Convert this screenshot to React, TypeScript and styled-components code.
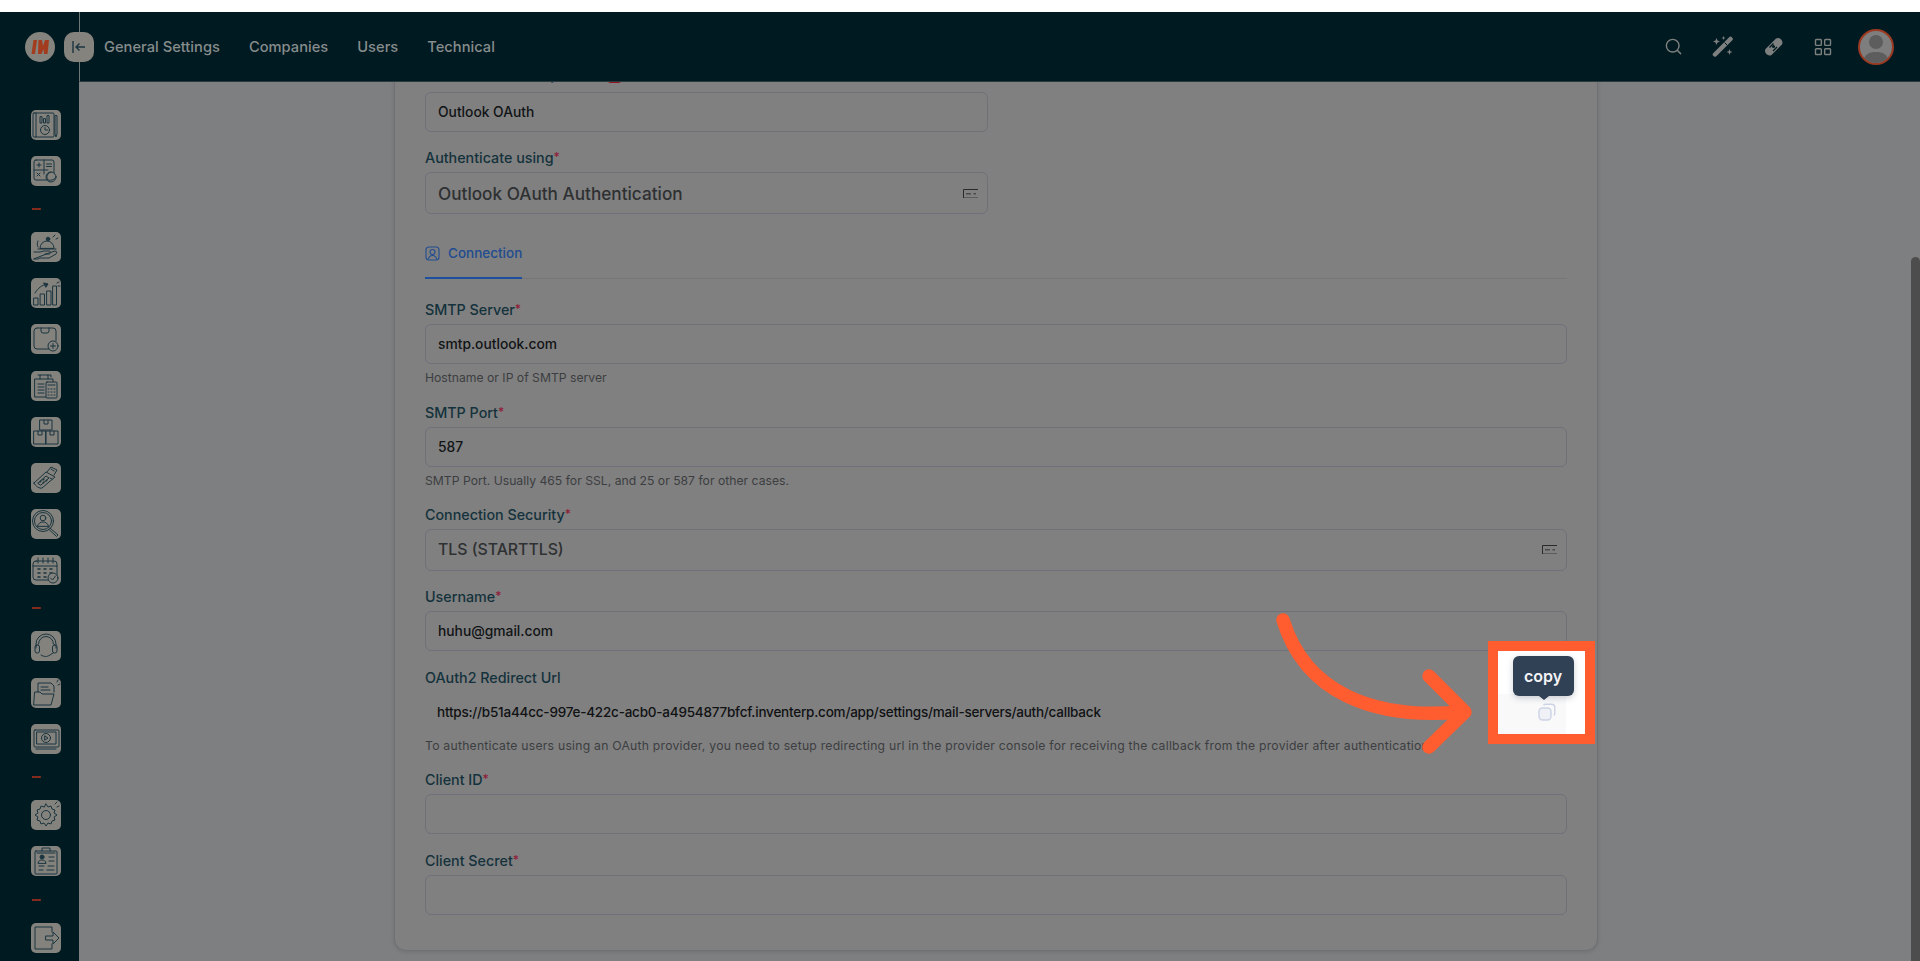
import React from 'react'
import styled, { createGlobalStyle } from 'styled-components'
import { Search, LayoutGrid } from 'lucide-react'

const GlobalStyle = createGlobalStyle`
    html, body {
        margin: 0;
        height: 961px;
        overflow: hidden;
        background: #ffffff;
        font-family: 'Inter', 'Liberation Sans', sans-serif;
    }
`

const Page = styled.div`
    position: relative;
    width: 1920px;
    height: 961px;
    padding-top: 12px;
    box-sizing: border-box;
    overflow: hidden;
    display: flex;
`

const Sidebar = styled.aside`
    width: 79px;
    flex: none;
    background: #001a21;
    padding: 20px 0 0 31px;
    box-sizing: border-box;
    display: flex;
    flex-direction: column;
    gap: 16.05px;
`

const Logo = styled.div`
    width: 30px;
    height: 30px;
    margin: 0 0 31.5px -6px;
    border-radius: 50%;
    background: #85837d;
    display: flex;
    align-items: center;
    justify-content: center;
`

const Tile = styled.div`
    width: 30px;
    height: 30px;
    flex: none;
    border-radius: 5px;
    background: #83827c;
    svg {
        display: block;
    }
`

const Separator = styled.div`
    width: 9px;
    height: 14.7px;
    flex: none;
    margin-left: 1px;
    display: flex;
    align-items: center;
    &::before {
        content: '';
        width: 9px;
        height: 2px;
        background: repeating-linear-gradient(90deg, #8c2b1c 0 2.4px, #6d2a1e 2.4px 3px);
    }
`

const Main = styled.div`
    flex: 1;
    min-width: 0;
    display: flex;
    flex-direction: column;
`

const TopBar = styled.header`
    position: relative;
    height: 70px;
    flex: none;
    box-sizing: border-box;
    background: #001a21;
    border-left: 1px solid #6f7678;
    border-bottom: 1px solid #2b3a3e;
    padding: 0 26px 0 24px;
    display: flex;
    align-items: center;
    z-index: 2;
`

const CollapseButton = styled.button`
    position: absolute;
    left: -16px;
    top: 20px;
    width: 30px;
    height: 30px;
    padding: 0;
    border: 0;
    border-radius: 10px;
    background: #85837d;
    display: flex;
    align-items: center;
    justify-content: center;
`

const Nav = styled.nav`
    display: flex;
    gap: 29px;
`

const NavItem = styled.a`
    font-size: 14.7px;
    font-weight: 500;
    line-height: 20px;
    color: #878c8c;
`

const TopActions = styled.div`
    margin-left: auto;
    display: flex;
    align-items: center;
    color: #7d807e;
`

const ActionSlot = styled.span`
    width: 50px;
    display: flex;
    justify-content: center;
`

const Avatar = styled.div`
    width: 36px;
    height: 36px;
    margin-left: 10px;
    box-sizing: border-box;
    border: 2px solid #9a3a22;
    border-radius: 50%;
    background: #7e7e7e;
    overflow: hidden;
`

const Content = styled.main`
    position: relative;
    flex: 1;
    min-height: 0;
    overflow: hidden;
    background: #7e7f81;
    padding: 0 7px 10px 0;
    display: flex;
    justify-content: center;
    align-items: flex-end;
`

const ScrollThumb = styled.div`
    position: absolute;
    right: 0;
    top: 175px;
    bottom: 0;
    width: 9px;
    border-radius: 5px 5px 0 0;
    background: #4d4d4d;
`

const Card = styled.section`
    width: 1204px;
    flex: none;
    box-sizing: border-box;
    padding: 0 30px 35px;
    background: #808080;
    border: 1px solid #6f7076;
    border-radius: 12px;
    box-shadow: 0 1px 4px rgba(0, 0, 0, 0.12);
    display: flex;
    flex-direction: column;
    gap: 16.6px;
`

const Field = styled.div<{ $half?: boolean; $labelGap?: number }>`
    display: flex;
    flex-direction: column;
    gap: ${(p) => p.$labelGap ?? 4}px;
    width: ${(p) => (p.$half ? '563px' : '100%')};
`

const Label = styled.label`
    font-size: 14.3px;
    font-weight: 500;
    line-height: 20px;
    height: 20px;
    color: #14323c;
`

const Req = styled.span`
    color: #8f1d3a;
    font-size: 12px;
    line-height: 1;
    vertical-align: 2px;
`

const Flag = styled.span`
    display: inline-block;
    width: 15px;
    height: 12px;
    margin-left: 22px;
    border-radius: 4px;
    background: #8f1420;
    vertical-align: -3px;
`

const Input = styled.div`
    height: 40px;
    box-sizing: border-box;
    padding: 0 12px;
    border: 1.5px solid #6f707a;
    border-radius: 6px;
    display: flex;
    align-items: center;
    font-size: 13.8px;
    font-weight: 500;
    color: #111416;
`

const SelectBox = styled(Input)<{ $size: number }>`
    height: 41.5px;
    padding-right: 9px;
    justify-content: space-between;
    font-size: ${(p) => p.$size}px;
    color: #2e3032;
`

const ReadOnlyValue = styled.div`
    height: 40px;
    padding: 0 12px;
    display: flex;
    align-items: center;
    font-size: 13.5px;
    font-weight: 500;
    letter-spacing: -0.22px;
    color: #101214;
    white-space: nowrap;
`

const Hint = styled.p`
    margin: 2px 0 0;
    font-size: 12.2px;
    line-height: 16px;
    color: #3c3e41;
    white-space: nowrap;
`

const LongHint = styled(Hint)`
    letter-spacing: 0.24px;
`

const Tabs = styled.div`
    height: 46px;
    margin: 3px 0 4px;
    box-sizing: border-box;
    border-bottom: 1px solid #767778;
    display: flex;
`

const Tab = styled.div`
    height: 46px;
    box-sizing: border-box;
    padding-bottom: 4px;
    border-bottom: 2.5px solid #1c4f9e;
    display: flex;
    align-items: center;
    gap: 8px;
    font-size: 13.5px;
    font-weight: 500;
    color: #214c90;
`

const Spotlight = styled.div`
    position: absolute;
    left: 1488px;
    top: 641px;
    width: 107px;
    height: 103px;
    box-sizing: border-box;
    border: 10px solid #ff5c2f;
    background: linear-gradient(90deg, #f9f9fa 0 68px, #ffffff 68px);
    z-index: 5;
    display: flex;
    flex-direction: column;
    align-items: center;
    &::before {
        content: '';
        position: absolute;
        inset: 0 0 40px 0;
        background: #ffffff;
    }
`

const Tooltip = styled.div`
    position: relative;
    width: 61px;
    height: 40px;
    margin: 5px 0 0 3px;
    border-radius: 6px;
    background: #304156;
    box-shadow: 0 2px 6px rgba(48, 65, 86, 0.25);
    display: flex;
    align-items: center;
    justify-content: center;
    font-size: 16px;
    font-weight: 600;
    color: #f2f3f5;
    &::after {
        content: '';
        position: absolute;
        left: 26px;
        bottom: -4px;
        border-left: 5px solid transparent;
        border-right: 5px solid transparent;
        border-top: 4px solid #304156;
    }
`

const CopyIcon = styled.svg`
    position: relative;
    margin: 7px 0 0 10px;
`

const Annotation = styled.svg`
    position: absolute;
    left: 1270px;
    top: 605px;
    z-index: 4;
`

const ink = {
    fill: 'none',
    stroke: '#1b3540',
    strokeWidth: 1,
    strokeLinecap: 'round',
    strokeLinejoin: 'round',
} as const

const sidebarIcons: React.ReactNode[] = [
    <>
        <rect x="2" y="3" width="21" height="24" rx="1" />
        <path d="M5 3v24M26 6v18l-1 3-1-3V6z" />
        <path d="M9 7v6h2V7zM12.5 9v4h2V9zM16 6v7h2V6z" />
        <circle cx="14" cy="20" r="4.5" />
        <path d="M14 17.5V20h2.5" />
    </>,
    <>
        <rect x="3" y="4" width="20" height="20" rx="2" />
        <path d="M13 4v14M3 14h14M6 9h4M8 7v4M15.5 8h5M15.5 10.5h5M6 17l3 3M9 17l-3 3" />
        <circle cx="20" cy="21" r="5" fill="#83827c" />
        <path d="M20 16a5 5 0 0 0-3 8c4 1 7-1 8-3" />
    </>,
    <>
        <circle cx="17" cy="7" r="1.8" fill="#1b3540" />
        <path d="M9 16a7 7 0 0 1 14 0zM7 17h18M7 9c-1 2-1 4 0 6M22 5l2-2M25 7l2-1" />
        <path d="M3 20h6l4-1h5c2 0 2 3 0 3h-4M18 21l6-2c2 0 2 2 1 3l-7 4H9l-2 1H3z" />
    </>,
    <>
        <rect x="3" y="20" width="4" height="7" />
        <rect x="9.5" y="16" width="4" height="11" />
        <rect x="16" y="13" width="4" height="14" />
        <rect x="22" y="8" width="3.5" height="19" />
        <path d="M4 15c3-5 7-8 12-9" />
        <path d="M13 5l4 1-2 3z" fill="#1b3540" />
        <path d="M26 5l2-1M27 8h2" />
    </>,
    <>
        <path d="M6 4h16a3 3 0 0 1 3 3v10M18 25H6a3 3 0 0 1-3-3V7a3 3 0 0 1 3-3" />
        <path d="M10 4v3a2 2 0 0 0 2 2h4a2 2 0 0 0 2-2V4" />
        <circle cx="22" cy="22" r="5" />
        <path d="M22 19.5v5M19.5 22h5" />
    </>,
    <>
        <path d="M4 8h18v18H4zM9 8V4h8v4M7 4h2M17 4h3v2" />
        <path d="M7 13h6M7 16h6M7 19h6M7 22h6" />
        <rect x="15" y="11" width="11" height="16" rx="1" fill="#83827c" />
        <path d="M17 14h7M17 18h1M20 18h1M23 18h1M17 21h1M20 21h1M23 21h1M17 24h1M20 24h1M23 24h1" />
    </>,
    <>
        <path d="M9 3h12v10H9zM13 3v4h4V3" />
        <path d="M3 14h12v13H3zM7 14v4h4v-4" />
        <path d="M15 14h12v13H15zM19 14v4h4v-4" />
    </>,
    <>
        <path d="M3 20L15 9l9 5-13 11c-2 1-7-2-8-5z" />
        <path d="M7 20l8-7 3 2-8 7zM19 15l2 1" />
        <path d="M9 19l1-1M12 17l1-1M12 20l1-1M15 18l1-1" strokeWidth="1.3" />
        <path d="M16 9l4-5 6 3-3 5M20 6l3 2" />
    </>,
    <>
        <circle cx="12" cy="12" r="10.5" />
        <circle cx="12" cy="12" r="8.5" />
        <circle cx="12" cy="9" r="2.8" />
        <path d="M6.5 17c1-3 3-4 5.5-4s4.500 1 5.500 4zM19 19l8 7-1.500 1.500-7.500-7" />
    </>,
    <>
        <rect x="2" y="6" width="24" height="19" rx="3" />
        <path d="M2 11h24M7 3v5M12 3v5M17 3v5M22 3v5" />
        <path d="M7 14h2M13 14h2M19 14h2M7 18h2M13 18h2M19 18h2M7 22h2M13 22h2" strokeWidth="1.6" />
        <circle cx="22" cy="23" r="5" fill="#83827c" />
        <path d="M19.500 23l2 2 3-4" />
    </>,
    <>
        <path d="M5 17v-4a10 10 0 0 1 20 0v4M7.500 13a7.500 7.500 0 0 1 15 0" />
        <rect x="4" y="14" width="4.500" height="8" rx="2" />
        <rect x="21.500" y="14" width="4.500" height="8" rx="2" />
        <path d="M10 24c3 2 6 2 9 0l3-2" />
    </>,
    <>
        <path d="M7 14V5h13l3 3v6" />
        <path d="M10 9h7M10 12h9" />
        <path d="M4 14h5l2 2h12l-3 11H3z" />
        <path d="M26 4l1-2M27 7l2-1" />
    </>,
    <>
        <rect x="3" y="6" width="25" height="17" rx="1" />
        <rect x="6" y="8" width="19" height="12" />
        <circle cx="15" cy="14" r="4.500" />
        <path d="M14 12l3 2-3 2zM5 25h20" />
    </>,
    <>
        <path d="M15 4l2 3 3-1 1 3 3 1-1 3 3 2-3 2 1 3-3 1-1 3-3-1-2 3-2-3-3 1-1-3-3-1 1-3-3-2 3-2-1-3 3-1 1-3 3 1z" />
        <circle cx="15" cy="15" r="4.500" />
        <path d="M24 4l2-2M26 7l2-1" />
    </>,
    <>
        <rect x="4" y="5" width="22" height="23" rx="1" />
        <path d="M11 5V2h8v3M6 7h18" />
        <circle cx="11" cy="11" r="2" fill="#1b3540" />
        <path d="M7 17c0-2 2-3 4-3s4 1 4 3zM18 11h5M18 15h5M8 20h5M17 20h6M8 24h4M16 24h7" />
    </>,
    <>
        <path d="M21 9V4H4v22h17v-5" />
        <path d="M15 13h7V9l6 6-6 6v-4h-7z" />
    </>,
]

const SidebarIcon = ({ index }: { index: number }) => (
    <Tile>
        <svg width="30" height="30" viewBox="0 0 30 30" {...ink}>
            {sidebarIcons[index]}
        </svg>
    </Tile>
)

const SelectGlyph = () => (
    <svg width="15" height="9" viewBox="0 0 15 9">
        <path d="M.5 9V.5H15" fill="none" stroke="#2a2a2a" />
        <path d="M3 4h5v1.500H3zM10.500 4H13v1.500h-2.500z" fill="#4a4a4a" />
        <rect x="1" y="8" width="14" height="1" fill="#5c5c5c" />
    </svg>
)

const Required = () => <Req>*</Req>

export default function App() {
    return (
        <Page>
            <GlobalStyle />
            <Sidebar>
                <Logo>
                    <svg width="20" height="16" viewBox="0 0 20 16">
                        <path
                            d="M3.500 1H7L5 15H1.500zM8.500 1H12l1 6 2-6h4l-1.500 14H14l-.5-5-2 5H8z"
                            fill="#a33c1e"
                        />
                    </svg>
                </Logo>
                <SidebarIcon index={0} />
                <SidebarIcon index={1} />
                <Separator />
                {[2, 3, 4, 5, 6, 7, 8, 9].map((i) => (
                    <SidebarIcon key={i} index={i} />
                ))}
                <Separator />
                {[10, 11, 12].map((i) => (
                    <SidebarIcon key={i} index={i} />
                ))}
                <Separator />
                <SidebarIcon index={13} />
                <SidebarIcon index={14} />
                <Separator />
                <SidebarIcon index={15} />
            </Sidebar>
            <Main>
                <TopBar>
                    <CollapseButton>
                        <svg width="14" height="12" viewBox="0 0 14 12" fill="none" stroke="#1b3540" strokeWidth="1.4">
                            <path d="M1 0v12M13 6H4M7.500 2.500L4 6l3.500 3.500" />
                        </svg>
                    </CollapseButton>
                    <Nav>
                        <NavItem>General Settings</NavItem>
                        <NavItem>Companies</NavItem>
                        <NavItem>Users</NavItem>
                        <NavItem>Technical</NavItem>
                    </Nav>
                    <TopActions>
                        <ActionSlot>
                            <Search size={19} strokeWidth={1.8} />
                        </ActionSlot>
                        <ActionSlot>
                            <svg width="22" height="21" viewBox="0 0 22 21" fill="#7d807e">
                                <path d="M3 18.500L18.500 3" stroke="#7d807e" strokeWidth="4.500" strokeLinecap="round" />
                                <path d="M12.500 6.500l3 3" stroke="#001a21" strokeWidth="1" />
                                <path d="M4.500 2l1 2.500L8 5.500 5.500 6.500l-1 2.500-1-2.500L1 5.500l2.500-1zM11.500 0l.6 1.400 1.400.6-1.400.6-.6 1.400-.6-1.400L9.500 2l1.400-.6zM17.500 13l.8 2.200 2.200.8-2.200.8-.8 2.200-.8-2.200-2.200-.8 2.200-.8z" />
                            </svg>
                        </ActionSlot>
                        <ActionSlot>
                            <svg width="21" height="21" viewBox="0 0 21 21">
                                <path
                                    d="M2.500 13l10.500-10.500a4.500 4.500 0 0 1 6 6L8.500 19a4.500 4.500 0 0 1-6-6z"
                                    fill="#7d807e"
                                />
                                <path d="M6.500 11.500l4-4M10 15l4-4" stroke="#001a21" strokeWidth="1.300" />
                                <circle cx="10.500" cy="10.500" r="1.500" fill="#001a21" />
                            </svg>
                        </ActionSlot>
                        <ActionSlot>
                            <LayoutGrid size={20} strokeWidth={1.7} />
                        </ActionSlot>
                        <Avatar>
                            <svg width="32" height="32" viewBox="0 0 32 32">
                                <circle cx="16" cy="11" r="7" fill="#5d5d5d" />
                                <path d="M3 32c1-9 6-11 13-11s12 2 13 11z" fill="#5d5d5d" />
                            </svg>
                        </Avatar>
                    </TopActions>
                </TopBar>
                <Content>
                    <Card>
                        <Field $half $labelGap={7}>
                            <Label>
                                Mail Server Description<Flag />
                            </Label>
                            <Input>Outlook OAuth</Input>
                        </Field>
                        <Field $half>
                            <Label>
                                Authenticate using<Required />
                            </Label>
                            <SelectBox $size={17.2}>
                                Outlook OAuth Authentication
                                <SelectGlyph />
                            </SelectBox>
                        </Field>
                        <Tabs>
                            <Tab>
                                <svg width="15" height="15" viewBox="0 0 15 15" fill="none" stroke="#214c90" strokeWidth="1.100">
                                    <rect x="1" y="1" width="13" height="13" rx="3" />
                                    <circle cx="7.500" cy="6" r="2.500" />
                                    <path d="M3.500 13c.5-2.500 2-3.500 4-3.500s3.500 1 4 3.500" />
                                </svg>
                                Connection
                            </Tab>
                        </Tabs>
                        <Field>
                            <Label>
                                SMTP Server<Required />
                            </Label>
                            <Input>smtp.outlook.com</Input>
                            <Hint>Hostname or IP of SMTP server</Hint>
                        </Field>
                        <Field>
                            <Label>
                                SMTP Port<Required />
                            </Label>
                            <Input>587</Input>
                            <Hint>SMTP Port. Usually 465 for SSL, and 25 or 587 for other cases.</Hint>
                        </Field>
                        <Field>
                            <Label>
                                Connection Security<Required />
                            </Label>
                            <SelectBox $size={15.8}>
                                TLS (STARTTLS)
                                <SelectGlyph />
                            </SelectBox>
                        </Field>
                        <Field>
                            <Label>
                                Username<Required />
                            </Label>
                            <Input>huhu@gmail.com</Input>
                        </Field>
                        <Field>
                            <Label>OAuth2 Redirect Url</Label>
                            <ReadOnlyValue>
                                https://b51a44cc-997e-422c-acb0-a4954877bfcf.inventerp.com/app/settings/mail-servers/auth/callback
                            </ReadOnlyValue>
                            <LongHint>
                                To authenticate users using an OAuth provider, you need to setup redirecting url in the
                                provider console for receiving the callback from the provider after authentication.
                            </LongHint>
                        </Field>
                        <Field>
                            <Label>
                                Client ID<Required />
                            </Label>
                            <Input />
                        </Field>
                        <Field>
                            <Label>
                                Client Secret<Required />
                            </Label>
                            <Input />
                        </Field>
                    </Card>
                    <ScrollThumb />
                </Content>
            </Main>
            <Annotation width="215" height="160" viewBox="1270 605 215 160" fill="none" stroke="#ff5c2f" strokeWidth="13.5" strokeLinecap="round" strokeLinejoin="round">
                <path d="M1283 620C1305 692 1372 720 1462 712" />
                <path d="M1429 676L1465 712L1429 747" />
            </Annotation>
            <Spotlight>
                <Tooltip>copy</Tooltip>
                <CopyIcon width="18" height="18" viewBox="0 0 18 18" fill="none" stroke="#cdd3e6" strokeWidth="1.400">
                    <rect x="1" y="5" width="12" height="12" rx="3.500" fill="#f0f1f7" />
                    <path d="M5.500 2.200A3 3 0 0 1 7.500 1.200h6a3.300 3.300 0 0 1 3.300 3.300v6a3 3 0 0 1-1 2" />
                </CopyIcon>
            </Spotlight>
        </Page>
    )
}
